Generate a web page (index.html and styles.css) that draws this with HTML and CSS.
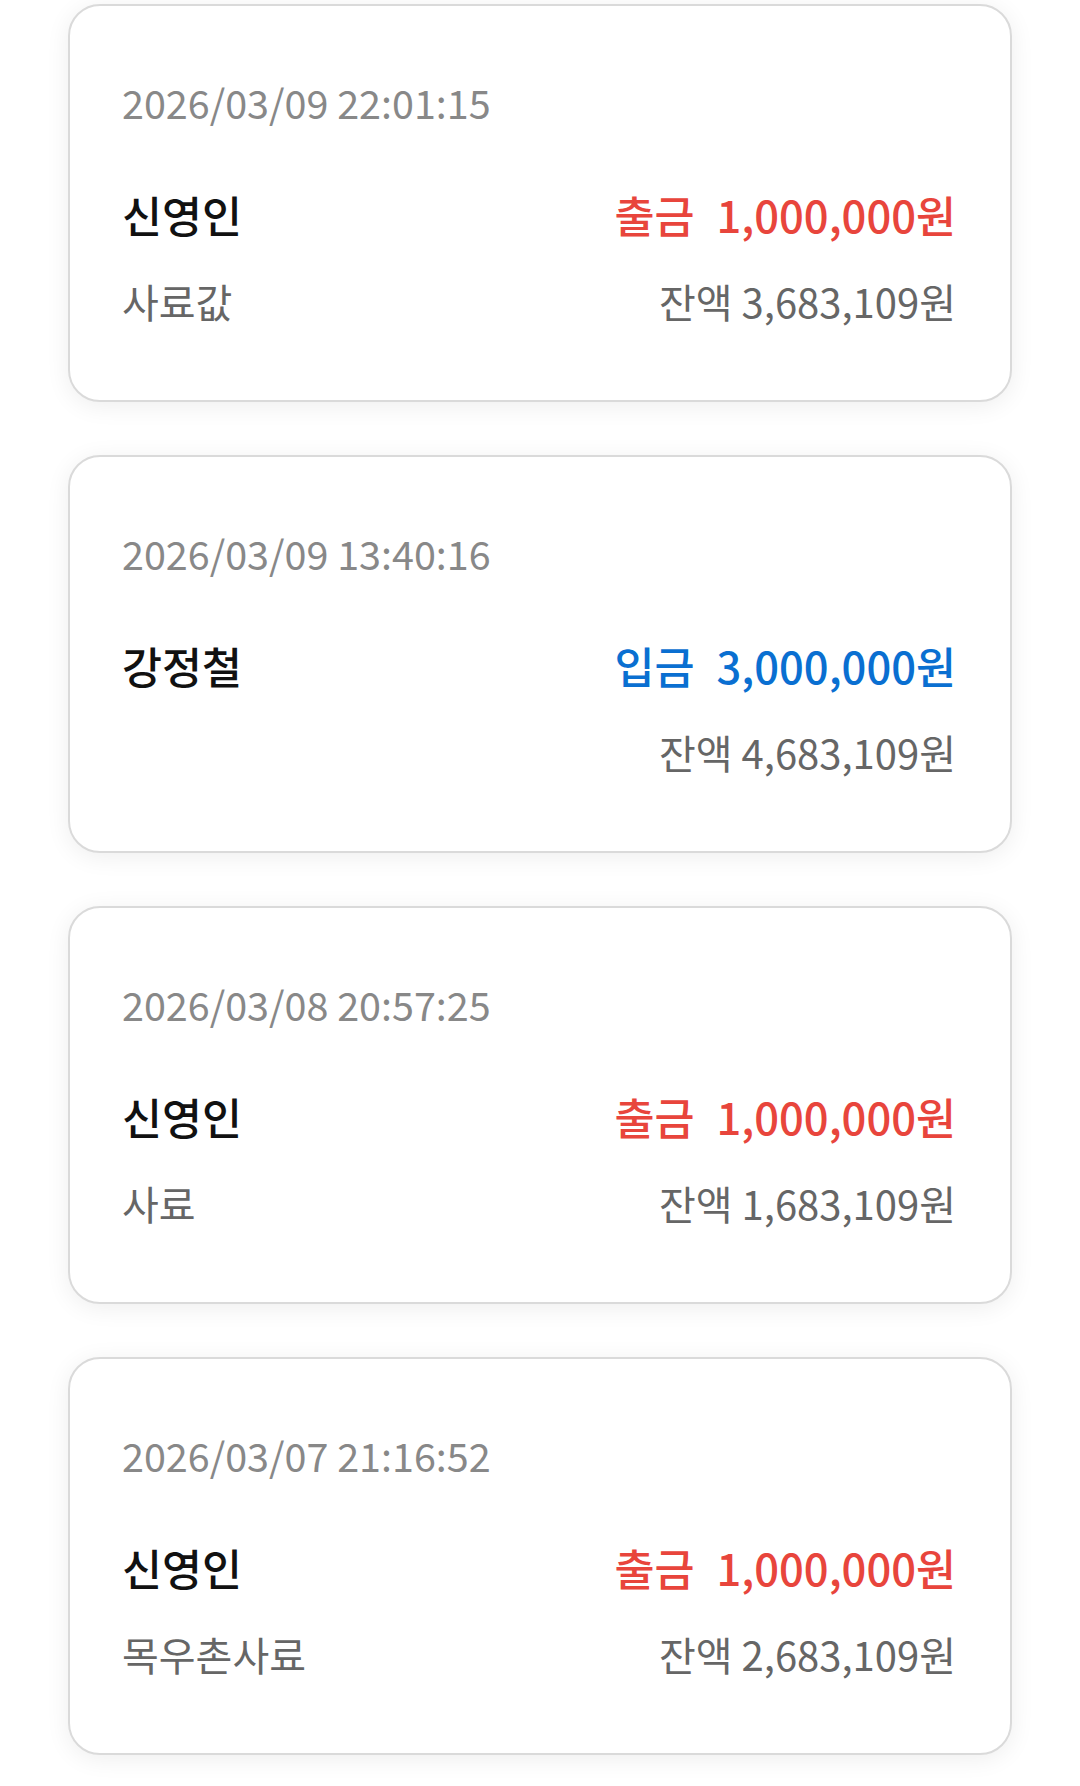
FILE: index.html
```html
<!DOCTYPE html>
<html>
<head>
    <meta charset="UTF-8">
    <meta name="viewport" content="width=device-width, initial-scale=1.0">
    <title>거래내역</title>
    <link rel="stylesheet" href="styles.css">
</head>
<body>

<div class="list">
    <div class="card">
        <div class="date">2026/03/09 22:01:15</div>
        <div class="row main">
            <span class="name">신영인</span>
            <span class="amount out"><span class="kind">출금</span>1,000,000원</span>
        </div>
        <div class="row sub">
            <span class="memo">사료값</span>
            <span class="balance">잔액 3,683,109원</span>
        </div>
    </div>

    <div class="card">
        <div class="date">2026/03/09 13:40:16</div>
        <div class="row main">
            <span class="name">강정철</span>
            <span class="amount in"><span class="kind">입금</span>3,000,000원</span>
        </div>
        <div class="row sub">
            <span class="memo"></span>
            <span class="balance">잔액 4,683,109원</span>
        </div>
    </div>

    <div class="card">
        <div class="date">2026/03/08 20:57:25</div>
        <div class="row main">
            <span class="name">신영인</span>
            <span class="amount out"><span class="kind">출금</span>1,000,000원</span>
        </div>
        <div class="row sub">
            <span class="memo">사료</span>
            <span class="balance">잔액 1,683,109원</span>
        </div>
    </div>

    <div class="card">
        <div class="date">2026/03/07 21:16:52</div>
        <div class="row main">
            <span class="name">신영인</span>
            <span class="amount out"><span class="kind">출금</span>1,000,000원</span>
        </div>
        <div class="row sub">
            <span class="memo">목우촌사료</span>
            <span class="balance">잔액 2,683,109원</span>
        </div>
    </div>
</div>

</body>
</html>
```

FILE: styles.css
```css
* {
    box-sizing: border-box;
    margin: 0;
    padding: 0;
}
body {
    font-family: "Noto Sans CJK KR", "Noto Sans", sans-serif;
    background-color: #fff;
    color: #111;
}
.list {
    display: flex;
    flex-direction: column;
    gap: 53px;
    padding: 4px 68px 40px;
}
.card {
    background-color: #fff;
    border: 2px solid #dadada;
    border-radius: 32px;
    padding: 67px 54px 70px 52px;
    box-shadow: 0 4px 24px rgba(0, 0, 0, 0.07);
}
.date {
    font-size: 39.5px;
    line-height: 58px;
    color: #888;
}
.row {
    display: flex;
    justify-content: space-between;
    align-items: baseline;
}
.row.main {
    margin-top: 54px;
    font-size: 43.5px;
    line-height: 60px;
    font-weight: 500;
}
.row.sub {
    margin-top: 27px;
    font-size: 40px;
    line-height: 58px;
    color: #666;
}
.amount.out {
    color: #e8453c;
}
.amount.in {
    color: #0a6fd1;
}
.kind {
    margin-right: 22px;
}
.name {
    color: #111;
}
```
